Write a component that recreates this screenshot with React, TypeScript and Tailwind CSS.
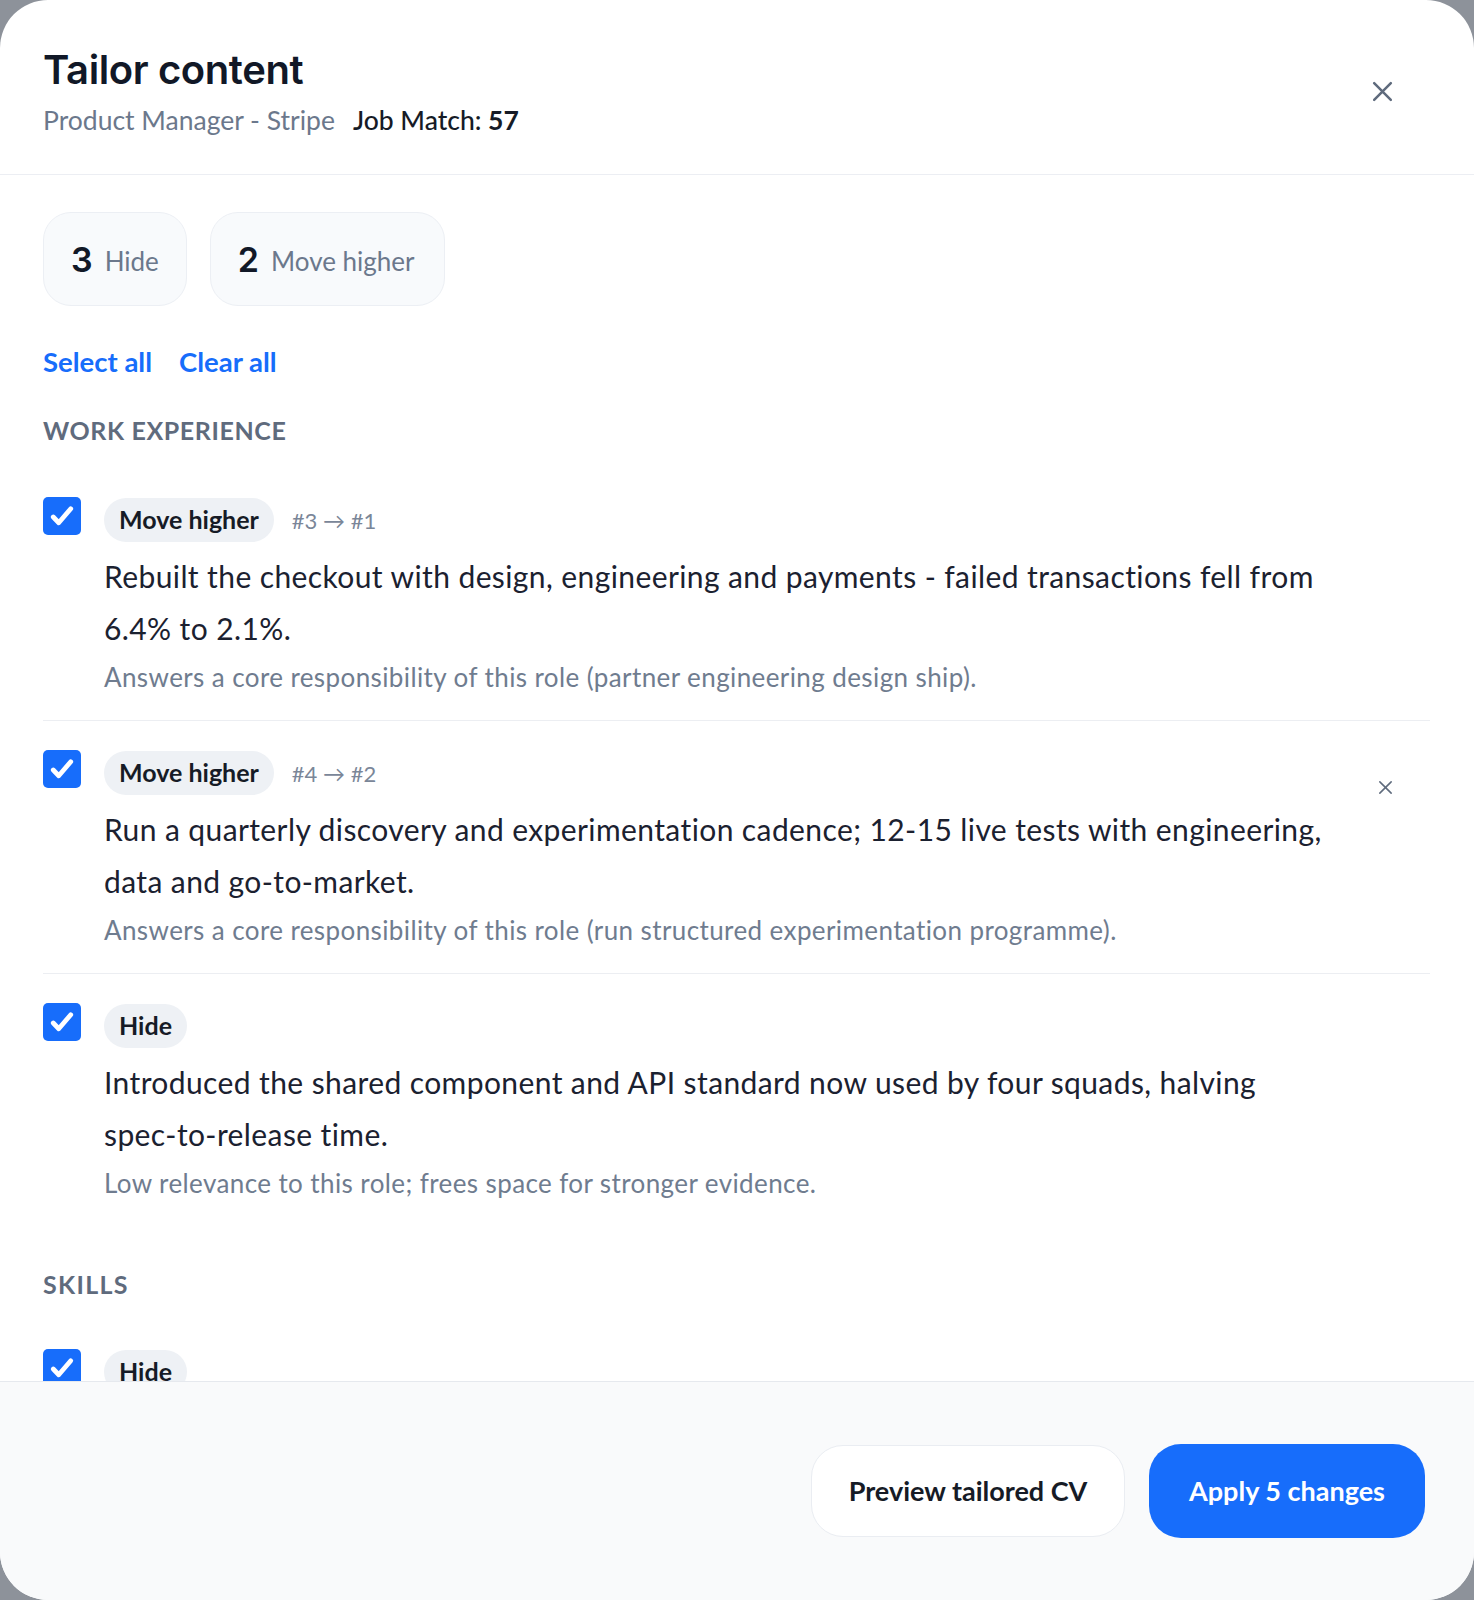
import React from 'react';

type Change = {
  kind: string;
  move?: string;
  text: React.ReactNode;
  reason: string;
  showDismiss?: boolean;
};

const workChanges: Change[] = [
  {
    kind: 'Move higher',
    move: '#3 → #1',
    text: 'Rebuilt the checkout with design, engineering and payments - failed transactions fell from 6.4% to 2.1%.',
    reason: 'Answers a core responsibility of this role (partner engineering design ship).',
  },
  {
    kind: 'Move higher',
    move: '#4 → #2',
    text: 'Run a quarterly discovery and experimentation cadence; 12-15 live tests with engineering, data and go-to-market.',
    reason: 'Answers a core responsibility of this role (run structured experimentation programme).',
    showDismiss: true,
  },
  {
    kind: 'Hide',
    text: (
      <>
        Introduced the shared component and API standard now used by four squads, halving{' '}
        <span className="whitespace-nowrap">spec-to-release</span> time.
      </>
    ),
    reason: 'Low relevance to this role; frees space for stronger evidence.',
  },
];

const body = { fontFamily: 'Lato, "Noto Sans", sans-serif' };
const head = { fontFamily: 'Inter, "Noto Sans", sans-serif' };

const Checkbox = () => (
  <div className="w-[38px] h-[38px] rounded-[5px] bg-[#176dfb] flex items-center justify-center shrink-0">
    <svg width="30" height="30" viewBox="0 0 24 24" fill="none">
      <path d="M5 12.8l4.4 4.6L19 6.2" stroke="white" strokeWidth="3.8" strokeLinecap="round" strokeLinejoin="round" />
    </svg>
  </div>
);

const CloseIcon = ({ size, stroke }: { size: number; stroke: number }) => (
  <svg width={size} height={size} viewBox="0 0 24 24" fill="none">
    <path d="M4 4l16 16M20 4L4 20" stroke="#5f6b7d" strokeWidth={stroke} strokeLinecap="round" />
  </svg>
);

const ChangeRow = ({ change, last }: { change: Change; last?: boolean }) => (
  <div className={`relative flex gap-[23px] ${last ? 'pb-[26px]' : 'pb-[26px] border-b border-[#eceef2]'}`}>
    <Checkbox />
    <div className="flex-1 pr-[100px] pt-[1px]">
      <div className="flex items-center gap-[18px]">
        <span className="h-[44px] px-[15px] rounded-full bg-[#eef1f5] flex items-center text-[25px] font-bold text-[#161b26]">
          {change.kind}
        </span>
        {change.move && <span className="text-[22px] text-[#7a8698]">{change.move}</span>}
      </div>
      <p className="mt-[8px] text-[30px] tracking-[0.4px] leading-[52px] text-[#1b2130]">{change.text}</p>
      <p className="mt-[6px] text-[26px] tracking-[0.4px] leading-[34px] text-[#6f7c8f]">{change.reason}</p>
    </div>
    {change.showDismiss && (
      <div className="absolute right-[36px] top-[29px]">
        <CloseIcon size={17} stroke={2.2} />
      </div>
    )}
  </div>
);

export default function App() {
  return (
    <div className="w-[1474px] h-[1600px] bg-[#8d929a]" style={body}>
      <div className="w-full h-full bg-white rounded-[48px] overflow-hidden flex flex-col">
        {/* header */}
        <div className="flex items-center justify-between pl-[43px] pr-[79px] pt-[46px] pb-[38px] border-b border-[#eceef3]">
          <div>
            <h1 className="text-[40px] leading-[48px] font-semibold tracking-[-0.4px] text-[#111827]" style={head}>
              Tailor content
            </h1>
            <div className="mt-[10px] flex items-center gap-[18px] text-[26.5px] leading-[32px]">
              <span className="text-[#6b788c]">Product Manager - Stripe</span>
              <span className="text-[#161b26] font-medium">
                Job Match: <span className="font-bold">57</span>
              </span>
            </div>
          </div>
          <CloseIcon size={25} stroke={2.4} />
        </div>

        {/* scroll area */}
        <div className="flex-1 overflow-hidden pl-[43px] pr-[44px] pt-[37px]">
          <div className="flex gap-[23px]">
            <div className="h-[94px] pl-[27px] pr-[27px] rounded-[28px] bg-[#f8fafc] border border-[#eceff4] flex items-center gap-[12px]">
              <span className="text-[34px] font-semibold text-[#111827]" style={head}>3</span>
              <span className="text-[26px] text-[#6b788c] mt-[4px]">Hide</span>
            </div>
            <div className="h-[94px] pl-[27px] pr-[29px] rounded-[28px] bg-[#f8fafc] border border-[#eceff4] flex items-center gap-[12px]">
              <span className="text-[34px] font-semibold text-[#111827]" style={head}>2</span>
              <span className="text-[26px] text-[#6b788c] mt-[4px]">Move higher</span>
            </div>
          </div>

          <div className="mt-[39px] flex gap-[27px] text-[27.5px] leading-[34px] font-bold text-[#176dfb]">
            <span>Select all</span>
            <span>Clear all</span>
          </div>

          <h2 className="mt-[35px] text-[25px] leading-[32px] font-bold tracking-[0.6px] text-[#5f6b7d]">
            WORK EXPERIENCE
          </h2>

          <div className="mt-[51px] flex flex-col gap-[29px]">
            {workChanges.map((c, i) => (
              <ChangeRow key={i} change={c} last={i === workChanges.length - 1} />
            ))}
          </div>

          <h2 className="mt-[42px] text-[25px] leading-[32px] font-bold tracking-[1.3px] text-[#5f6b7d]">SKILLS</h2>

          <div className="mt-[49px] flex gap-[23px]">
            <Checkbox />
            <div className="pt-[1px]">
              <span className="h-[44px] px-[15px] rounded-full bg-[#eef1f5] flex items-center text-[25px] font-bold text-[#161b26]">
                Hide
              </span>
            </div>
          </div>
        </div>

        {/* footer */}
        <div className="h-[219px] shrink-0 border-t border-[#e6e9ee] bg-[#f9fafb] flex items-center justify-end gap-[24px] pr-[49px]">
          <button className="h-[92px] w-[314px] rounded-[32px] bg-white border border-[#eaedf2] text-[27px] font-bold text-[#161b26]">
            Preview tailored CV
          </button>
          <button className="h-[94px] w-[276px] rounded-[32px] bg-[#176dfb] text-[27px] font-bold text-white">
            Apply 5 changes
          </button>
        </div>
      </div>
    </div>
  );
}
